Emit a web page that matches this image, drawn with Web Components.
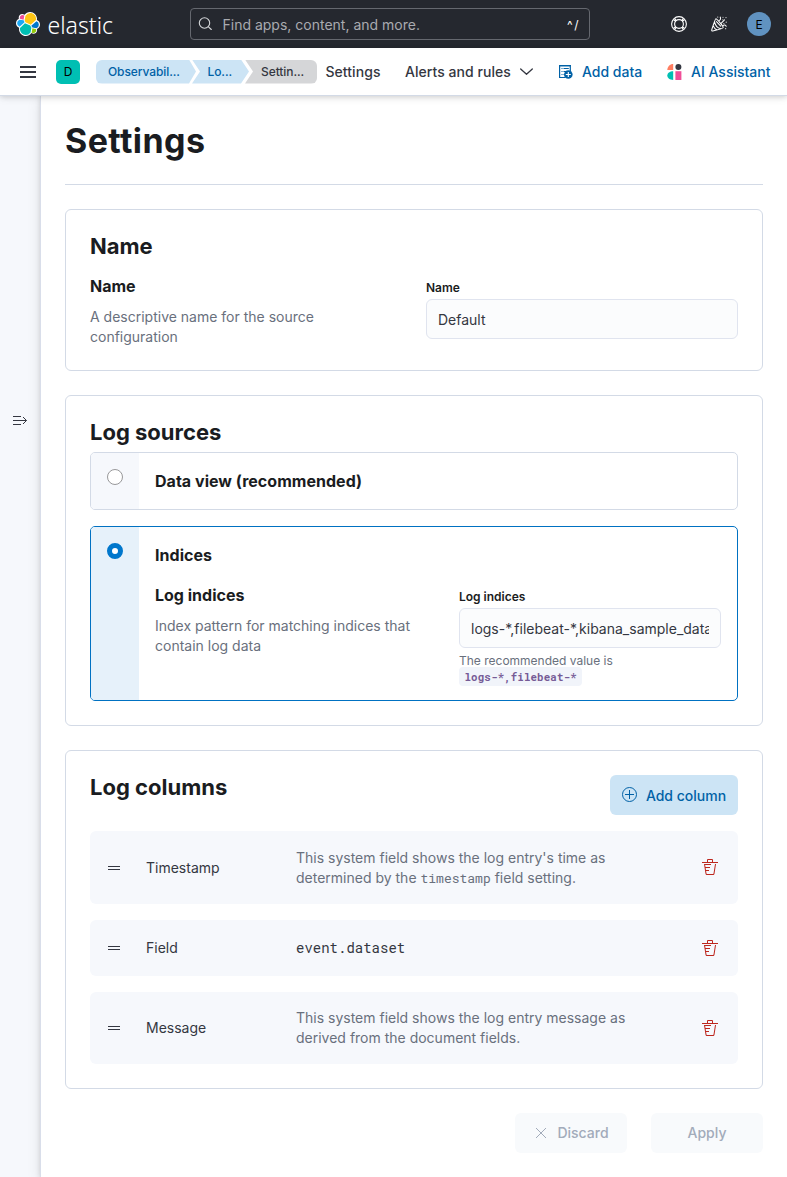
<!DOCTYPE html>
<html lang="en">
<head>
<meta charset="utf-8">
<title>Settings - Observability - Elastic</title>
<style>
html, body { margin: 0; padding: 0; background: #fff; }
body { font: 14px/20px Inter, "Liberation Sans", sans-serif; color: #343741; width: 787px; height: 1177px; overflow: hidden; }
</style>
</head>
<body>
<settings-app></settings-app>
<script>
const ICONS = {
  trash: '<path fill="currentColor" d="M11 3h5v1H0V3h5V1a1 1 0 0 1 1-1h4a1 1 0 0 1 1 1v2zm-7.056 8H7v1H4.1l.392 2.519c.042.269.254.458.493.458h6.03c.239 0 .451-.189.493-.458l1.498-9.576H14l-1.504 9.73c-.116.747-.74 1.304-1.481 1.304h-6.03c-.741 0-1.365-.557-1.481-1.304l-1.511-9.73H9V5.95H3.157L3.476 8H8v1H3.632l.312 2zM6 3h4V1H6v2z"/>',
  plus: '<g fill="none" stroke="currentColor"><circle cx="7.5" cy="7.5" r="7"/><path d="M7.5 3v9M3 7.5h9"/></g>',
  cross: '<path fill="none" stroke="currentColor" d="M3 3l10 10M13 3L3 13"/>',
  grab: '<path fill="currentColor" d="M2 6h12v1H2zM2 9h12v1H2z"/>',
  menu: '<path fill="currentColor" d="M0 2h16v2H0zM0 7h16v2H0zM0 12h16v2H0z"/>',
  expand: '<path fill="none" stroke="currentColor" d="M1 3.5h8M1 7.5h13.5M1 11.5h8M11 4l3.5 3.5L11 11"/>',
  down: '<path fill="none" stroke="currentColor" stroke-width="1.4" stroke-linecap="round" stroke-linejoin="round" d="M1.8 5.3L8 11l6.200-5.700"/>',
  search: '<g fill="none" stroke="currentColor" stroke-width="1.1" stroke-linecap="round"><circle cx="6.500" cy="7" r="5.200"/><path d="M10.500 10.800L13.300 13.500"/></g>',
  help: '<g fill="none" stroke="currentColor" stroke-width="1.100"><circle cx="8" cy="8" r="7.400"/><circle cx="8" cy="8" r="4.400"/><path d="M2.600 3.700l2.100 1.700M3.700 2.600l1.700 2.100M13.400 3.700l-2.100 1.700M12.300 2.600l-1.700 2.100M2.600 12.300l2.100-1.700M3.700 13.400l1.700-2.100M13.400 12.300l-2.100-1.700M12.300 13.400l-1.700-2.100"/></g>',
  cheer: '<g fill="none" stroke="currentColor" stroke-width="1.050" stroke-linecap="round" stroke-linejoin="round"><path d="M4.900 2.800C4.300 2.800.7 13.600.7 14.300s.6.700 1 .6c2.500-.6 10.500-2.700 10.500-3.500C12.200 10.300 5.900 2.800 4.900 2.800zM3.700 6.300c.6 2.600 3 5.600 5.900 6.400M2.400 10.100c.7 1.600 1.800 3 3.300 3.900M5.500 5.600l4.200 4.500"/><path d="M8.100 4.500c1.500-.6 1.800-2 1.100-3.400M10.300 7.200l3.200-3.400M12 9.500c1.300-.8 2.500-.5 3.200.8"/><path d="M12 1.200v.1M15 1.500v.1M11.900 3.700v.1M15.200 6.100v.1M14.700 12.600v.1M6.800 1v.1M12.900 7.500v.1"/></g>',
  add: '<g fill="none" stroke="currentColor" stroke-width="1.200"><path d="M7.500 13.500H1.600V1.600h10.700V7"/><path d="M3.500 4.500h1M5.500 4.500h5.300M3.500 7.500h1M5.500 7.500h3M3.500 10.500h1M5.500 10.500H6.500"/></g><path fill="currentColor" d="M1 1h11.900v1.300H1z"/><circle cx="10.300" cy="10.500" r="4.300" fill="currentColor"/><path d="M10.300 8v5M7.800 10.500h5" stroke="#fff" stroke-width="1.100"/>',
  ai: '<path fill="#ff7e62" d="M6.200.1v6H.3C.3 2.800 2.900.1 6.200.1z"/><circle cx="11.400" cy="3.100" r="3" fill="#343741"/><path fill="#00bfb3" d="M6.200 7.200V16C2.900 16 .3 14.200.3 11.600S2.900 7.200 6.200 7.200z"/><path fill="#f04e98" d="M8.400 7.200h6V16h-6z"/>',
  logo: '<path fill="#fff" d="M32 16.770c0-2.680-1.660-5.030-4.200-5.970.1-.6.2-1.200.2-1.700C27.900 4.100 23.800 0 18.700 0c-2.900 0-5.600 1.400-7.400 3.800-.9-.7-1.900-1-3-1-2.600 0-4.700 2.100-4.700 4.700 0 .6.100 1.100.3 1.600C1.600 10 0 12.300 0 14.900c0 2.700 1.700 5 4.200 6-.1.500-.2 1.100-.2 1.700 0 5.200 4.100 9.400 9.100 9.400 3 0 5.700-1.700 7.400-4.100.8.700 1.900 1 3 1 2.600 0 4.700-2.100 4.700-4.700 0-.6-.1-1.100-.3-1.600 2.500-.8 4.100-3.200 4.100-5.830"/><path fill="#fec514" d="M12.580 13.787l7.002 3.211 7.066-6.213a7.849 7.849 0 0 0 .152-1.557c0-4.287-3.472-7.762-7.756-7.762a7.759 7.759 0 0 0-6.404 3.380l-1.176 6.120 1.116 2.821z"/><path fill="#00bfb3" d="M5.333 21.228a8.010 8.010 0 0 0-.15 1.586 7.784 7.784 0 0 0 7.775 7.775 7.770 7.770 0 0 0 6.424-3.393l1.166-6.102-1.557-2.985-7.030-3.211-6.628 6.330z"/><path fill="#f04e98" d="M5.288 9.084l4.800 1.134L11.140 4.750A3.790 3.790 0 0 0 5.055 7.770c0 .453.080.9.233 1.314z"/><path fill="#1ba9f5" d="M4.870 10.227A5.026 5.026 0 0 0 1.500 14.970a5.030 5.030 0 0 0 3.223 4.690l6.734-6.104-1.237-2.651-5.350-.678z"/><path fill="#93c90e" d="M20.874 27.196a3.780 3.780 0 0 0 6.083-3.014c0-.454-.078-.9-.232-1.313l-4.795-1.126-1.056 5.453z"/><path fill="#07c" d="M21.848 20.563l5.280 1.238a5.020 5.020 0 0 0 3.370-4.742 5.030 5.030 0 0 0-3.220-4.685l-6.906 6.065 1.476 2.124z"/>'
};

function define(name, css, html) {
  const t = document.createElement('template');
  t.innerHTML = `<style>*{box-sizing:border-box}${css}</style>${html}`;
  customElements.define(name, class extends HTMLElement {
    constructor() {
      super();
      this.attachShadow({ mode: 'open' }).append(t.content.cloneNode(true));
    }
  });
}

customElements.define('ui-icon', class extends HTMLElement {
  connectedCallback() {
    if (this.shadowRoot) return;
    const name = this.getAttribute('name');
    const size = this.getAttribute('size') || 16;
    const box = name === 'logo' ? 32 : 16;
    this.attachShadow({ mode: 'open' }).innerHTML =
      `<style>:host{display:block;flex:none;width:${size}px;height:${size}px}svg{display:block}</style>
       <svg width="${size}" height="${size}" viewBox="0 0 ${box} ${box}">${ICONS[name]}</svg>`;
  }
});

define('top-bar', `
:host { display: flex; align-items: center; height: 48px; background: #25282f; padding: 0 16px; color: #fff; box-sizing: border-box; }
.word { width: 68px; height: 36px; margin-left: 6px; display: block; overflow: visible; }
.search { display: flex; align-items: center; width: 400px; height: 32px; margin-left: 76px; border: 1px solid #65686f; border-radius: 4px; padding: 0 9px 0 7px; color: #a9abb0; }
.search ui-icon { color: #d5d7da; }
.search .ph { margin-left: 8.500px; flex: 1; padding-top: 1px; }
.search .key { color: #fff; font-size: 12px; letter-spacing: 1.500px; padding-top: 2px; }
.right { display: flex; align-items: center; margin-left: auto; gap: 24px; }
.avatar { width: 24px; height: 24px; border-radius: 50%; background: #6092c0; color: #000; font-size: 12px; font-weight: 400; line-height: 25px; text-align: center; margin-left: -4px; }
`, `<ui-icon name="logo" size="24"></ui-icon>
<svg class="word" viewBox="0 0 68 36"><text x="1.500" y="28" fill="#fff" font-family="Noto Sans" font-weight="300" font-size="24.500" textLength="65.500" lengthAdjust="spacingAndGlyphs">elastic</text></svg>
<div class="search"><ui-icon name="search"></ui-icon><span class="ph">Find apps, content, and more.</span><span class="key">^/</span></div>
<div class="right"><ui-icon name="help"></ui-icon><ui-icon name="cheer"></ui-icon><span class="avatar">E</span></div>`);

define('bread-crumb', `
:host { display: block; flex: none; height: 24px; line-height: 24px; box-sizing: border-box; font-size: 12px; font-weight: 500; color: #0061a6; background: #cce4f5; padding-left: 12px; white-space: nowrap; letter-spacing: -.08px; }
:host([kind=first]) { width: 100px; border-radius: 6px 0 0 6px; clip-path: polygon(0 0, 93px 0, 100% 50%, 93px 100%, 0 100%); }
:host([kind=mid]) { width: 57px; margin-left: -4px; padding-left: 15.500px; clip-path: polygon(0 0, 49px 0, 100% 50%, 49px 100%, 0 100%, 8px 50%); }
:host([kind=last]) { width: 72px; margin-left: -4px; padding-left: 16px; color: #343741; background: #d5d6d8; border-radius: 0 6px 6px 0; clip-path: polygon(0 0, 100% 0, 100% 100%, 0 100%, 8px 50%); }
`, `<slot></slot>`);

define('nav-bar', `
:host { display: flex; align-items: center; height: 48px; background: #fff; border-bottom: 1px solid #d3dae6; padding: 0 16px 0 20px; box-sizing: border-box; box-shadow: 0 1px 5px rgba(0,0,0,.14), 0 3px 8px rgba(0,0,0,.06); position: relative; z-index: 2; font-weight: 500; white-space: nowrap; }
.space { width: 24px; height: 24px; margin: 0 16px 0 20px; border-radius: 5px; background: #00bfb3; color: #000; font-size: 12px; font-weight: 400; line-height: 24px; text-align: center; }
.crumbs { display: flex; width: 221px; }
.s { margin-left: 8.500px; width: 79.500px; letter-spacing: .05px; } .a { width: 113.500px; letter-spacing: .05px; }
.link { color: #0061a6; display: flex; align-items: center; }
.add { margin-left: 24px; } .add span { margin-left: 8.500px; width: 85px; }
.link b { font-weight: 500; margin-left: 8px; }
`, `<ui-icon name="menu"></ui-icon><span class="space">D</span>
<div class="crumbs"><bread-crumb kind="first">Observabil...</bread-crumb><bread-crumb kind="mid">Lo...</bread-crumb><bread-crumb kind="last">Settin...</bread-crumb></div>
<span class="s">Settings</span><span class="a">Alerts and rules</span><ui-icon name="down" size="15"></ui-icon>
<span class="link add"><ui-icon name="add"></ui-icon><span>Add data</span></span>
<span class="link"><ui-icon name="ai"></ui-icon><b>AI Assistant</b></span>`);

define('side-rail', `
:host { display: block; flex: none; width: 40px; background: #f6f8fc; color: #343741; box-sizing: border-box; padding: 317px 0 0 12px; }
`, `<ui-icon name="expand"></ui-icon>`);

define('ui-panel', `
:host { display: block; border: 1px solid #d3dae6; border-radius: 6px; padding: 24px; margin-top: 24px; box-sizing: border-box; }
header { display: flex; justify-content: space-between; }
h2 { margin: 0; font-size: 22px; line-height: 24px; font-weight: 700; color: #1a1c21; }
`, `<header><h2><slot name="title"></slot></h2><slot name="action"></slot></header><slot></slot>`);

define('form-group', `
:host { display: grid; grid-template-columns: 1fr var(--field, 312px); column-gap: 24px; margin-top: 16px; }
h3 { margin: 0 0 9px; font-size: 16px; line-height: 24px; color: #1a1c21; font-weight: 700; }
p { margin: 0 0 -1px; color: #69707d; line-height: 20px; }
`, `<div><h3><slot name="title"></slot></h3><p><slot name="text"></slot></p></div><slot></slot>`);

define('text-field', `
:host { display: block; padding-top: 5px; min-width: 0; }
label { display: block; font-size: 12px; line-height: 18px; font-weight: 600; color: #1a1c21; margin-bottom: 2px; }
.box { height: 40px; border: 1px solid #e0e4ef; border-radius: 6px; background: #fbfcfd; padding: 0 11px; }
.value { overflow: hidden; white-space: nowrap; line-height: 40px; color: #343741; }
`, `<label><slot name="label"></slot></label><div class="box"><div class="value"><slot></slot></div></div><slot name="help"></slot>`);

define('help-code', `
:host { display: block; height: 36px; margin-top: 4px; font-size: 12px; line-height: 17px; color: #69707d; }
code { display: block; width: 123px; height: 19px; margin-top: -2px; padding-left: 5.500px; border-radius: 4px; background: #f1f4fa; color: #765b96; font: 700 10.800px/20px "Roboto Mono", "Liberation Mono", monospace; letter-spacing: 0.120px; white-space: nowrap; }
`, `The recommended value is<code>logs-*,filebeat-*</code>`);

define('radio-card', `
:host { display: flex; border: 1px solid #d3dae6; border-radius: 5px; overflow: hidden; box-sizing: border-box; margin-top: 8px; }
:host([checked]) { border-color: #0071c2; margin-top: 16px; height: 175px; }
.strip { flex: none; width: 48px; background: #f6f8fc; padding: 16px; }
:host([checked]) .strip { background: #e6f1fa; }
i { display: block; width: 16px; height: 16px; border-radius: 50%; border: 1px solid #98989a; background: #fff; }
:host([checked]) i { border: 5px solid #0077cc; }
.body { flex: 1; min-width: 0; padding: 16px; }
h3 { margin: 0; font-size: 16px; line-height: 24px; font-weight: 700; color: #1a1c21; letter-spacing: .03px; }
`, `<div class="strip"><i></i></div><div class="body"><h3><slot name="title"></slot></h3><slot></slot></div>`);

define('ui-button', `
:host { display: flex; flex: none; align-items: center; justify-content: center; height: 40px; width: 112px; border-radius: 6px; background: #f8fafc; color: #a2abba; font-weight: 500; box-sizing: border-box; }
:host([primary]) { width: 128px; background: #cce4f5; color: #0061a6; padding-top: 1px; }
slot[name=icon]::slotted(*) { margin-right: 8px; }
:host([primary]) slot[name=icon]::slotted(*) { margin-top: -2px; }
`, `<slot name="icon"></slot><slot></slot>`);

define('column-row', `
:host { display: grid; grid-template-columns: 40px 150px 1fr 16px; align-items: center; height: 72px; margin-top: 16px; background: #f6f8fc; border-radius: 6px; padding: 0 20px 0 16px; box-sizing: border-box; }
ui-icon[name=trash] { color: #bd271e; }
:host(.first) ui-icon[name=trash] { margin-top: -1px; }
.d { color: #69707d; width: 345px; }
:host([field]) .d { color: #343741; font-family: "Roboto Mono", "Liberation Mono", monospace; }
`, `<ui-icon name="grab"></ui-icon><span class="n"><slot name="name"></slot></span><span class="d"><slot></slot></span><ui-icon name="trash"></ui-icon>`);

define('settings-app', `
:host { display: block; }
.wrap { display: flex; height: 1081px; }
main { flex: 1; border-left: 1px solid #d9deea; background: #fff; padding: 24px 24px 0; box-shadow: 0 1px 5px rgba(0,0,0,.13), 0 4px 14px rgba(0,0,0,.09); }
h1 { margin: 0; height: 65px; border-bottom: 1px solid #d3dae6; font-size: 34px; line-height: 42px; font-weight: 700; color: #1a1c21; letter-spacing: .4px; }
.mono { font: 13px/18px "Roboto Mono", "Liberation Mono", monospace; }
.first { height: 73px; }
.f { height: 56px; }
footer { display: flex; justify-content: flex-end; gap: 24px; margin-top: 24px; }
`, `<top-bar></top-bar><nav-bar></nav-bar>
<div class="wrap"><side-rail></side-rail>
<main><h1>Settings</h1>
<ui-panel><span slot="title">Name</span>
 <form-group><span slot="title">Name</span><span slot="text">A descriptive name for the source<br>configuration</span>
 <text-field><span slot="label">Name</span>Default</text-field></form-group></ui-panel>
<ui-panel><span slot="title">Log sources</span>
 <radio-card><span slot="title">Data view (recommended)</span></radio-card>
 <radio-card checked><span slot="title">Indices</span>
 <form-group style="--field:262px"><span slot="title">Log indices</span><span slot="text">Index pattern for matching indices that<br>contain log data</span>
 <text-field><span slot="label">Log indices</span>logs-*,filebeat-*,kibana_sample_data_logs*<help-code slot="help"></help-code></text-field></form-group></radio-card></ui-panel>
<ui-panel><span slot="title">Log columns</span><ui-button slot="action" primary><ui-icon slot="icon" name="plus"></ui-icon>Add column</ui-button>
 <column-row class="first"><span slot="name">Timestamp</span>This system field shows the log entry's time as<br>determined by the <span class="mono">timestamp</span> field setting.</column-row>
 <column-row class="f" field><span slot="name">Field</span>event.dataset</column-row>
 <column-row><span slot="name">Message</span>This system field shows the log entry message as<br>derived from the document fields.</column-row></ui-panel>
<footer><ui-button><ui-icon slot="icon" name="cross"></ui-icon>Discard</ui-button><ui-button>Apply</ui-button></footer>
</main></div>`);
</script>
</body>
</html>
